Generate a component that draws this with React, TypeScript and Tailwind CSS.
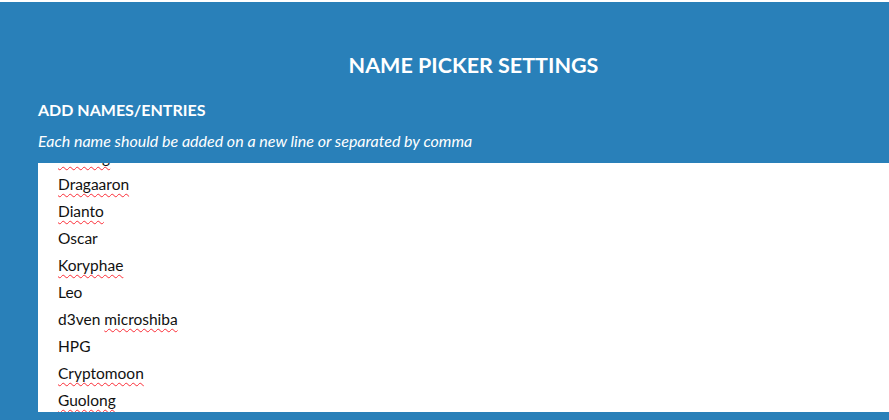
const names = [
  { name: 'Gaming', typo: true },
  { name: 'Dragaaron', typo: true },
  { name: 'Dianto', typo: true },
  { name: 'Oscar', typo: false },
  { name: 'Koryphae', typo: true },
  { name: 'Leo', typo: false },
  { name: 'd3ven microshiba', typo: false },
  { name: 'HPG', typo: false },
  { name: 'Cryptomoon', typo: true },
  { name: 'Guolong', typo: true },
];

const squiggle = 'underline decoration-wavy decoration-red-500 decoration-1 underline-offset-[3px]';

function Line({ name, typo }: { name: string; typo: boolean }) {
  if (name === 'd3ven microshiba') {
    return (
      <div className="h-[27px] leading-[27px]">
        d3ven <span className={squiggle}>microshiba</span>
      </div>
    );
  }
  return (
    <div className="h-[27px] leading-[27px]">
      <span className={typo ? squiggle : ''}>{name}</span>
    </div>
  );
}

export default function App() {
  return (
    <div className="h-[420px] w-full overflow-hidden border-t-2 border-white bg-[#2980b9] font-['Lato',sans-serif] text-white">
      <div className="w-[909px] pl-[38px]">
        <h1 className="pt-[49px] text-center text-[21.5px] font-bold leading-[28px]">NAME PICKER SETTINGS</h1>
        <h2 className="mt-[19px] text-[16px] font-bold leading-[24px]">ADD NAMES/ENTRIES</h2>
        <p className="mt-[8px] text-[16px] italic leading-[22px]">Each name should be added on a new line or separated by comma</p>
        <div className="mt-[11px] h-[249px] overflow-hidden bg-white px-[20px] text-[15.5px] text-[#111]">
          <div className="-mt-[19px]">
            {names.map((n) => (
              <Line key={n.name} name={n.name} typo={n.typo} />
            ))}
          </div>
        </div>
      </div>
    </div>
  );
}
